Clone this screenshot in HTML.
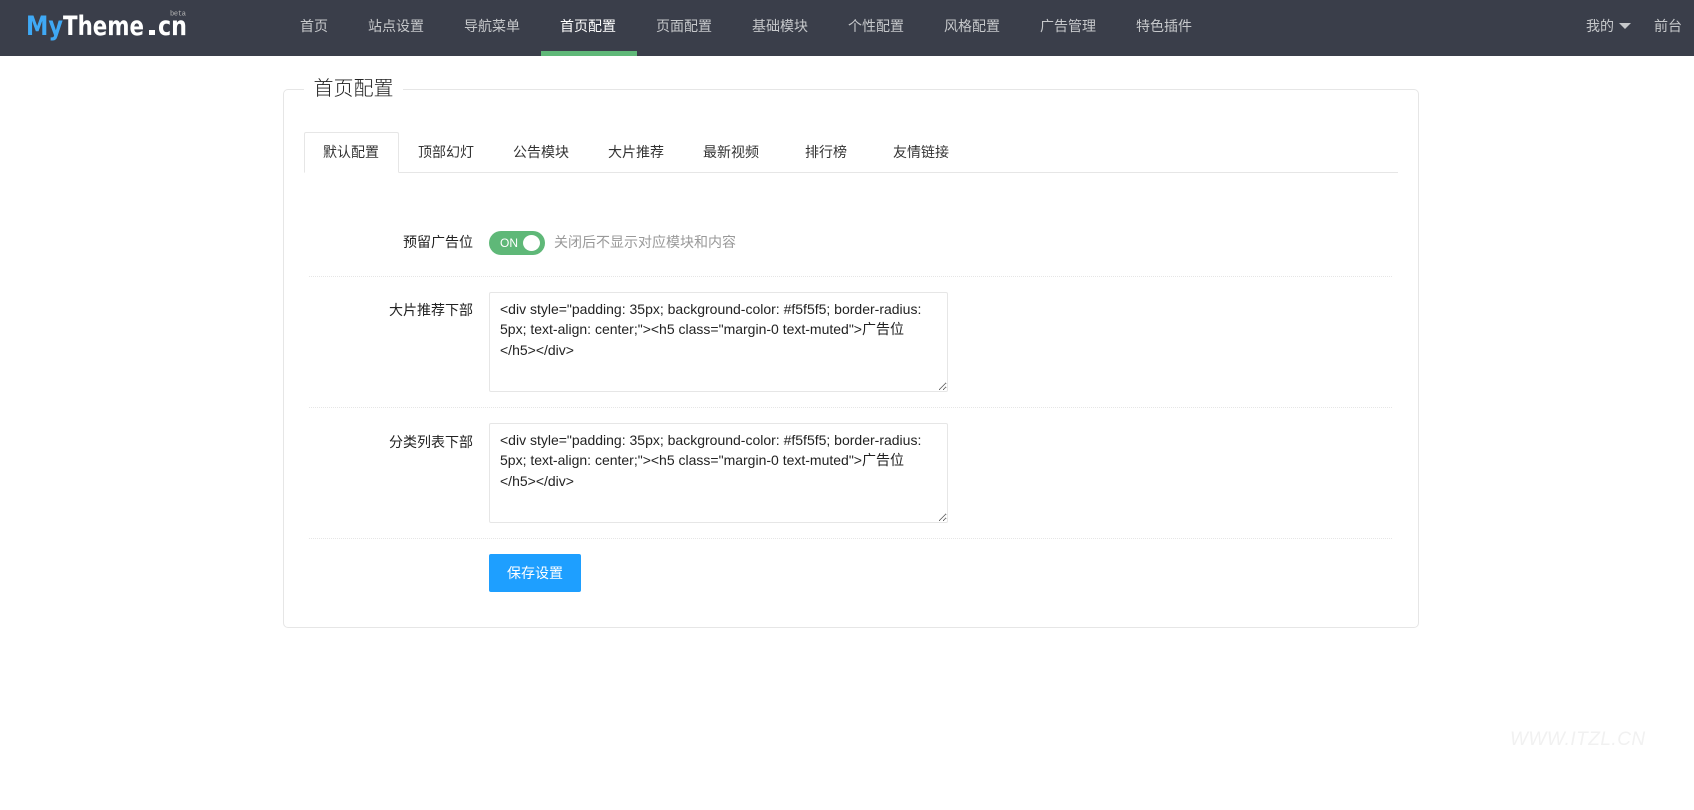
<!DOCTYPE html>
<html lang="zh-CN">
<head>
<meta charset="utf-8">
<title>首页配置</title>
<style>
*{box-sizing:border-box}
html,body{margin:0;padding:0;background:#fff;width:1694px;height:810px;overflow:hidden}
body{position:relative;font:14px/20px "Liberation Sans","Noto Sans CJK SC",sans-serif;color:#333}
.abs{position:absolute;white-space:nowrap}
#hd{position:absolute;left:0;top:0;width:1694px;height:56px;background:#3a3e4a}
#hd a{position:absolute;top:16px;color:#c6c8cb;line-height:20px;text-decoration:none;white-space:nowrap}
#hd a.on{color:#fff}
#bar{position:absolute;left:541px;top:51px;width:96px;height:5px;background:#5fb878}
#panel{position:absolute;left:283px;top:89px;width:1136px;height:539px;border:1px solid #e6e6e6;border-radius:5px}
#legend{position:absolute;left:304px;top:75px;width:99px;height:28px;background:#fff;text-align:center;font-size:20px;line-height:28px;color:#222;font-weight:300}
#tabline{position:absolute;left:304px;top:172px;width:1094px;height:1px;background:#e6e6e6}
#tabact{position:absolute;left:304px;top:132px;width:95px;height:41px;border:1px solid #e6e6e6;border-bottom:1px solid #fff;border-radius:2px 2px 0 0;background:#fff}
.tab{position:absolute;top:142px;width:94px;text-align:center;color:#333;line-height:20px}
.lab{position:absolute;width:170px;left:303px;text-align:right;color:#222;white-space:nowrap}
.dot{position:absolute;left:309px;width:1083px;height:1px;border-top:1px dotted #e6e6e6}
#sw{position:absolute;left:489px;top:231px;width:56px;height:24px;border-radius:12px;background:#5fb878;color:#fff;font-size:12px;line-height:24px;padding-left:11px}
#sw i{position:absolute;right:5px;top:4px;width:17px;height:16px;border-radius:50%;background:#fff}
textarea{position:absolute;left:489px;width:459px;height:100px;margin:0;padding:5.5px 10px;border:1px solid #e6e6e6;border-radius:2px;font:14px/20.5px "Liberation Sans","Noto Sans CJK SC",sans-serif;color:#222;background:#fff;resize:vertical;outline:0;overflow:hidden}
#btn{position:absolute;left:489px;top:554px;width:92px;height:38px;background:#1e9fff;border-radius:2px;color:#fff;text-align:center;line-height:38px}
</style>
</head>
<body>
<div id="hd">
  <svg width="200" height="56" style="position:absolute;left:0;top:0">
    <text x="26" y="35" font-family="'DejaVu Sans',sans-serif" font-weight="700" font-size="26.5" fill="#3fa9f5" textLength="37" lengthAdjust="spacingAndGlyphs">My</text>
    <text x="63" y="35" font-family="'DejaVu Sans',sans-serif" font-weight="700" font-size="26.5" fill="#fff" textLength="81" lengthAdjust="spacingAndGlyphs">Theme</text>
    <rect x="149" y="30" width="6" height="5" fill="#fff"/>
    <text x="158" y="35" font-family="'DejaVu Sans',sans-serif" font-weight="700" font-size="26.5" fill="#fff" textLength="29" lengthAdjust="spacingAndGlyphs">cn</text>
    <text x="170" y="15.5" font-family="'Liberation Mono',monospace" font-size="7" fill="#b5b5b5" textLength="16">beta</text>
  </svg>
  <a style="left:300px">首页</a>
  <a style="left:368px">站点设置</a>
  <a style="left:464px">导航菜单</a>
  <a class="on" style="left:560px">首页配置</a>
  <a style="left:656px">页面配置</a>
  <a style="left:752px">基础模块</a>
  <a style="left:848px">个性配置</a>
  <a style="left:944px">风格配置</a>
  <a style="left:1040px">广告管理</a>
  <a style="left:1136px">特色插件</a>
  <a style="left:1586px">我的</a>
  <svg width="12" height="6" style="position:absolute;left:1619px;top:23px"><path d="M0 0H12L6 6Z" fill="#c6c8cb"/></svg>
  <a style="left:1654px">前台</a>
  <div id="bar"></div>
</div>

<div id="panel"></div>
<div id="legend">首页配置</div>

<div id="tabline"></div>
<div id="tabact"></div>
<div class="tab" style="left:304px">默认配置</div>
<div class="tab" style="left:399px">顶部幻灯</div>
<div class="tab" style="left:494px">公告模块</div>
<div class="tab" style="left:589px">大片推荐</div>
<div class="tab" style="left:684px">最新视频</div>
<div class="tab" style="left:779px">排行榜</div>
<div class="tab" style="left:874px">友情链接</div>

<div class="lab" style="top:232px">预留广告位</div>
<div id="sw">ON<i></i></div>
<div class="abs" style="left:554px;top:232px;color:#999">关闭后不显示对应模块和内容</div>
<div class="dot" style="top:276px"></div>

<div class="lab" style="top:300px">大片推荐下部</div>
<textarea style="top:292px">&lt;div style="padding: 35px; background-color: #f5f5f5; border-radius: 5px; text-align: center;"&gt;&lt;h5 class="margin-0 text-muted"&gt;广告位&lt;/h5&gt;&lt;/div&gt;</textarea>
<div class="dot" style="top:407px"></div>

<div class="lab" style="top:432px">分类列表下部</div>
<textarea style="top:423px">&lt;div style="padding: 35px; background-color: #f5f5f5; border-radius: 5px; text-align: center;"&gt;&lt;h5 class="margin-0 text-muted"&gt;广告位&lt;/h5&gt;&lt;/div&gt;</textarea>
<div class="dot" style="top:538px"></div>

<div id="btn">保存设置</div>

<div class="abs" style="left:1510px;top:730px;font-size:19px;line-height:20px;font-style:italic;color:#f1f1f1;letter-spacing:.5px">WWW.ITZL.CN</div>
</body>
</html>
